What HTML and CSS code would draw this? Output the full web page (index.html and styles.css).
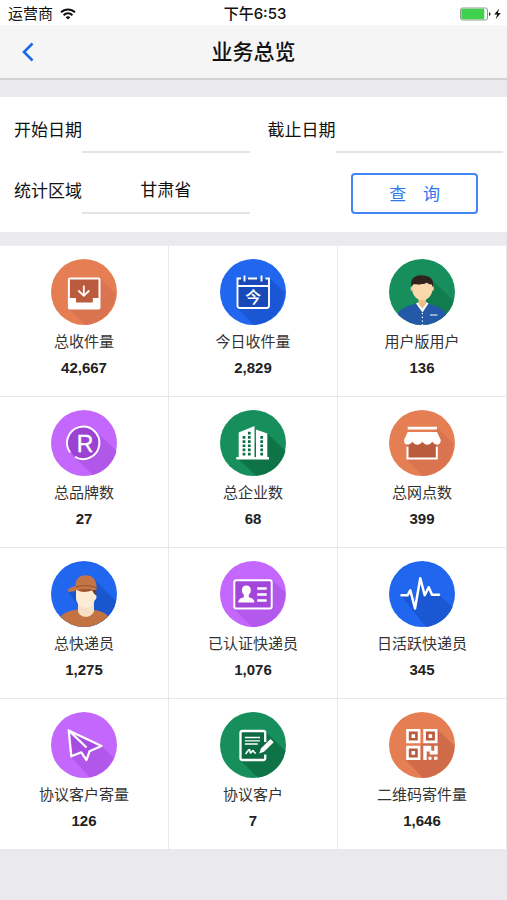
FILE: index.html
```html
<!DOCTYPE html>
<html lang="zh-CN">
<head>
<meta charset="utf-8">
<meta name="viewport" content="width=device-width, initial-scale=1">
<title>业务总览</title>
<link rel="stylesheet" href="styles.css">
</head>
<body>
<div class="status">
  <div class="status-side">
    <span>运营商</span>
    <svg width="16" height="12" viewBox="0 0 16 12" fill="none" stroke="#111" stroke-width="2" aria-hidden="true"><path d="M1 4.4a10 10 0 0 1 14 0M3.6 7.2a6.2 6.2 0 0 1 8.8 0"/><path d="M8 11.6 5.6 9.3a3.5 3.5 0 0 1 4.8 0z" fill="#111" stroke="none"/></svg>
  </div>
  <span class="status-time">下午6:53</span>
  <div class="status-side status-end">
    <svg width="42" height="14" viewBox="0 0 42 14" aria-hidden="true"><rect x=".5" y="1" width="27" height="12" rx="2" fill="#fff" stroke="#8b9a8c"/><rect x="1.3" y="1.8" width="23" height="10.4" rx="1.2" fill="#40d14f"/><path d="M29 5.2c2 .4 2 3.2 0 3.6z" fill="#333"/><path d="M39.2 1.6 34.2 7.6h3l-1.600 4.700 5.200-6.200h-3.100z" fill="#111"/></svg>
  </div>
</div>
<header class="nav">
  <a class="back" href="#" aria-label="返回"><svg width="12" height="20" viewBox="0 0 12 20" fill="none" stroke="#1668f5" stroke-width="2.600"><path d="M10.500 1.500 2 10l8.500 8.500"/></svg></a>
  <h1>业务总览</h1>
</header>
<main>
  <form class="filters">
    <div class="field"><label for="start">开始日期</label><input id="start" type="text"></div>
    <div class="field"><label for="end">截止日期</label><input id="end" type="text"></div>
    <div class="field"><label for="area">统计区域</label><select id="area"><option>甘肃省</option></select></div>
    <button class="query" type="button">查　询</button>
  </form>
  <section class="stats">
    <article class="stat">
      <svg class="icon" viewBox="0 0 66 66" aria-hidden="true"><circle cx="33" cy="33" r="33" fill="#e67e54"/><path d="M49 19 64.500 34.500A33 33 0 0 1 34.500 66L18 50z" fill="#d97350"/><rect x="17.900" y="19.500" width="30.600" height="30" rx="1" fill="#b95b3c" stroke="#fff" stroke-width="2"/><path d="M17 39h8v4.500h16.800V39H49v11H17z" fill="#fff"/><path d="M32.800 26.500v10M27.300 31.500l5.500 5.300 5.500-5.300" fill="none" stroke="#fff" stroke-width="1.800"/></svg>
      <h2>总收件量</h2><p>42,667</p>
    </article>
    <article class="stat">
      <svg class="icon" viewBox="0 0 66 66" aria-hidden="true"><circle cx="33" cy="33" r="33" fill="#2166ef"/><path d="M50 19 64.500 33.500A33 33 0 0 1 34 66L17 49z" fill="#1b57d5"/><path d="M17.500 20h31v29h-31z" fill="#1749b8"/><path d="M21 19.500h-3.500v27a2.500 2.500 0 0 0 2.500 2.500h26.500a2.500 2.500 0 0 0 2.500-2.500v-27h-3.500M28 19.500h9M17.500 27H49M24.500 16.500v6M41.500 16.500v6" fill="none" stroke="#fff" stroke-width="1.900"/><text class="glyph-today" x="33.200" y="43.500">今</text></svg>
      <h2>今日收件量</h2><p>2,829</p>
    </article>
    <article class="stat">
      <svg class="icon" viewBox="0 0 66 66" aria-hidden="true"><clipPath id="c1"><circle cx="33" cy="33" r="33"/></clipPath><g clip-path="url(#c1)"><path d="M0 0h66v66H0z" fill="#168f5d"/><path d="M43 21 66 43v23H48L28 44z" fill="#117d4e"/><path d="M9 66V54c3-5 9-7 18-9.500h12c9 2.500 15 4.500 18 9.500v12z" fill="#2459a8"/><path d="M27 44.500 30 43h7l2.500 1.500-6 9z" fill="#fff"/><path d="M29.500 38h7.500v7l-3.700 4.500-3.800-4.500z" fill="#efbd8c"/><ellipse cx="22.800" cy="29.500" rx="1.200" ry="2.600" fill="#f3c79a"/><ellipse cx="43.700" cy="29.500" rx="1.200" ry="2.600" fill="#f3c79a"/><path d="M23.300 23h20v8c0 5-5 10.500-10 10.500s-10-5.500-10-10.500z" fill="#fbd7ac"/><path d="M22.500 28c-1.700-7 2-11.500 9-11.700 8-.2 14.500 3.500 12.300 11.700l-1-2.500c-2.500.2-4-1-5-2-3 2.500-6 1-8 2.300-2.500-.8-4.500-.5-5.800-.3z" fill="#30231e"/><path d="M33.400 54v12" stroke="#fff" stroke-width="1.200" stroke-dasharray="1.300 2.400"/><path d="M41 56h7.500" stroke="#fff" stroke-width="1.200"/></g></svg>
      <h2>用户版用户</h2><p>136</p>
    </article>
    <article class="stat">
      <svg class="icon" viewBox="0 0 66 66" aria-hidden="true"><circle cx="33" cy="33" r="33" fill="#c467fc"/><path d="M45 21.500 65.500 41A33 33 0 0 1 42 65L21 45z" fill="#b157ea"/><circle cx="33" cy="33" r="16" fill="#9b42d3"/><path d="M19.200 42.500A16.200 16.200 0 1 1 24 46.800" fill="none" stroke="#fff" stroke-width="2"/><text class="glyph-r" x="34" y="42">R</text></svg>
      <h2>总品牌数</h2><p>27</p>
    </article>
    <article class="stat">
      <svg class="icon" viewBox="0 0 66 66" aria-hidden="true"><circle cx="33" cy="33" r="33" fill="#168f5d"/><path d="M47 23 65.500 41A33 33 0 0 1 36 65.800L17 48z" fill="#0e7448"/><path d="M18.700 22.500 34.500 16v31H36V19.500l11.300 4V47H49v2.500H16.300V47h2.400z" fill="#fff"/><g stroke="#0c7044" stroke-width="2.700"><path d="M24 26v20.500" stroke-dasharray="2.700 1.500"/><path d="M29.300 21.800v25" stroke-dasharray="2.700 1.500"/><path d="M41.700 26v20.500" stroke-dasharray="2.700 1.500"/></g></svg>
      <h2>总企业数</h2><p>68</p>
    </article>
    <article class="stat">
      <svg class="icon" viewBox="0 0 66 66" aria-hidden="true"><circle cx="33" cy="33" r="33" fill="#e67e54"/><path d="M48 17 64.500 33.500A33 33 0 0 1 34 66L17.500 49.500z" fill="#d97350"/><path d="M18 33h30v16H18z" fill="#b95b3c"/><path d="M18.500 36.500V48.500h29.300v-12" fill="none" stroke="#fff" stroke-width="2"/><path d="M18.700 16.800H48v2.800H18.700zM18.700 22H48l3.800 8c0 3-1.500 4.500-3.600 4.700-2.200 0-4-1.200-4.900-3.400-1 2.200-2.800 3.400-5 3.400s-4-1.200-5-3.400c-1 2.200-2.800 3.400-5 3.400s-4-1.200-5-3.400c-1 2.200-2.700 3.400-4.700 3.400-2.400-.2-3.700-1.700-3.600-4.700z" fill="#fff"/></svg>
      <h2>总网点数</h2><p>399</p>
    </article>
    <article class="stat">
      <svg class="icon" viewBox="0 0 66 66" aria-hidden="true"><clipPath id="c2"><circle cx="33" cy="33" r="33"/></clipPath><g clip-path="url(#c2)"><path d="M0 0h66v66H0z" fill="#2166ef"/><path d="M44 19 66 41v25H44L17 31z" fill="#1a57cf"/><path d="M9 66V56c4-4.500 9-6.500 18-7.500h13c9 1 14 3 18 7.500v10z" fill="#c37242"/><path d="M27 41h16v9c-1 3.500-4.500 5.800-8.500 5.800S27.500 53 27 50z" fill="#f8e0c6"/><path d="M25 28h19.500v6c1.500-.5 1.500 4.500-.8 5-1 5-4.700 8-8.700 8-6 0-10-5-10-10z" fill="#fdebd5"/><path d="M40.500 28.500h4.700v6l-1.700-1.500c-1.500-1-1-2-3-4.500z" fill="#704126"/><path d="M26 29c4 2.500 10 2.500 16 0l-3-2H28z" fill="#a45330"/><path d="M24.500 25c0-7 4-10.700 10.300-10.700 6.500 0 10.700 4.700 10.700 11.200V29c-6-1.500-16-1.500-21 .5-3 1.300-5.500 1.500-7.700.7-.5-2.200 4.500-4.700 7.700-5.200z" fill="#c47546"/><path d="M24.500 26c7-2 15-2 21 1" fill="none" stroke="#965131"/></g></svg>
      <h2>总快递员</h2><p>1,275</p>
    </article>
    <article class="stat">
      <svg class="icon" viewBox="0 0 66 66" aria-hidden="true"><circle cx="33" cy="33" r="33" fill="#c467fc"/><path d="M52 19 65 31A33 33 0 0 1 32 66L14 48z" fill="#b359eb"/><rect x="14.300" y="19.300" width="37.400" height="28.200" rx="2" fill="#a346da" stroke="#fff" stroke-width="2"/><path d="M26.300 24.500c3 0 4.500 2 4.500 4.800 0 2.200-1 3.500-2 4.500v2.500c2.700.8 5.500 1.700 5.700 5.200H18.200c.2-3.500 3-4.400 5.700-5.200v-2.500c-1-1-2-2.300-2-4.500 0-2.800 1.500-4.800 4.400-4.800z" fill="#fff"/><path d="M37.200 27.500h9.500M37.200 33.500h9.500M37.200 39.500h9.500" stroke="#fff" stroke-width="2.600"/></svg>
      <h2>已认证快递员</h2><p>1,076</p>
    </article>
    <article class="stat">
      <svg class="icon" viewBox="0 0 66 66" aria-hidden="true"><circle cx="33" cy="33" r="33" fill="#2166ef"/><path d="M12.500 35 37 66A33 33 0 0 0 63.500 46L50 34l-7-1-4-7-4 4-4-13-5 29-4.700-16.500z" fill="#1b57d3"/><path d="M12.500 34.300h6l2.800-5L26 47.500l5.300-30.300 4.400 17 4-8 3.300 7.500h7" fill="none" stroke="#fff" stroke-width="2.500" stroke-linejoin="round" stroke-linecap="round"/></svg>
      <h2>日活跃快递员</h2><p>345</p>
    </article>
    <article class="stat">
      <svg class="icon" viewBox="0 0 66 66" aria-hidden="true"><circle cx="33" cy="33" r="33" fill="#c467fc"/><path d="M51 34 62.500 46A33 33 0 0 1 39 65.400L20 45z" fill="#b157ea"/><path d="M17.700 18.500 50.500 34l-12 5.300-3 8.700-5.200-7.700-10 4z" fill="#a84be0" stroke="#fff" stroke-width="2.300" stroke-linejoin="round"/><path d="M18 18.700 35.500 35.500" stroke="#fff" stroke-width="2.300"/></svg>
      <h2>协议客户寄量</h2><p>126</p>
    </article>
    <article class="stat">
      <svg class="icon" viewBox="0 0 66 66" aria-hidden="true"><circle cx="33" cy="33" r="33" fill="#168f5d"/><path d="M45 19 65.500 39A33 33 0 0 1 38 65.600L20 48z" fill="#0e7448"/><path d="M20.500 19h24.700v29H20.500z" fill="#0c6a40"/><path d="M45.200 30v-9a2 2 0 0 0-2-2H22.500a2 2 0 0 0-2 2v25a2 2 0 0 0 2 2h20.700a2 2 0 0 0 2-2v-3.500" fill="none" stroke="#fff" stroke-width="2.300"/><path d="M24.800 25.500H40M24.800 28.800H40M24.800 32h13" stroke="#fff" stroke-width="1.300"/><path d="M25.500 42c2-2 2.500-4.500 4-4.500.8 0 0 3.500 1 3.500s1.500-2.500 2.500-2.500.5 3 3 2.500" fill="none" stroke="#fff" stroke-width="1.600"/><path d="m50.500 27 3.200 3.200-9.700 9.500-4.700 1.800 1.600-5z" fill="#fff"/></svg>
      <h2>协议客户</h2><p>7</p>
    </article>
    <article class="stat">
      <svg class="icon" viewBox="0 0 66 66" aria-hidden="true"><circle cx="33" cy="33" r="33" fill="#e67e54"/><path d="M48.500 17.500 65.500 34A33 33 0 0 1 34 66L17 48z" fill="#cf6b48"/><g fill="#b95b3c" stroke="#fff" stroke-width="2.600"><path d="M18.500 18.300h11.600v11.600H18.500zM35.600 18.300h11.600v11.600H35.600zM18.500 35.100h11.600v11.600H18.500z"/></g><path d="M22.500 22.300h3.600v3.600h-3.600zM39.600 22.300h3.600v3.600h-3.600zM22.500 39.100h3.600v3.600h-3.600zM34.300 33.800h8v5h3v-5h3.400v8.700h-8v-3h-3v8.500h-3.400zM39.500 44.800h3v3h-3zM45 44.800h3.500v3H45z" fill="#fff"/></svg>
      <h2>二维码寄件量</h2><p>1,646</p>
    </article>
  </section>
</main>
</body>
</html>
```
FILE: styles.css
```css
* {
  box-sizing: border-box;
}

body {
  margin: 0;
  min-height: 100vh;
  background: #e9e9ee;
  color: #111;
  font-family: "Liberation Sans", "Noto Sans CJK SC", sans-serif;
}

.status {
  display: flex;
  align-items: center;
  height: 25px;
  padding: 2px 5px 0 8px;
  background: #fff;
  font-size: 15px;
  line-height: 22px;
}

.status-side {
  display: flex;
  flex: 1;
  align-items: center;
  gap: 7px;
}

.status-end {
  justify-content: flex-end;
}

.status-time {
  font-family: Inter, "Noto Sans CJK SC", sans-serif;
  font-weight: 500;
}

.nav {
  display: grid;
  grid-template-columns: 56px 1fr 56px;
  align-items: center;
  height: 55px;
  border-bottom: 2px solid #d2d2d6;
  background: #f5f5f6;
}

.back {
  display: flex;
  justify-content: center;
}

.nav h1 {
  margin: 0;
  font-size: 21px;
  font-weight: 500;
  line-height: 30px;
  text-align: center;
}

.filters {
  display: grid;
  grid-template-columns: repeat(2, minmax(0, 1fr));
  row-gap: 15px;
  margin: 17px 0 13px;
  padding: 10px 0 18px;
  background: #fff;
  font-size: 17px;
}

.field {
  display: flex;
  align-items: center;
  height: 46px;
  padding: 0 4px 0 14px;
}

.field label {
  padding-bottom: 4px;
}

.field input,
.field select {
  flex: 1;
  min-width: 0;
  height: 46px;
  padding: 0;
  border: 0;
  border-bottom: 2px solid #e4e4e6;
  border-radius: 0;
  outline: 0;
  appearance: none;
  background: transparent;
  color: inherit;
  font: inherit;
  text-align: center;
  text-align-last: center;
}

.query {
  align-self: end;
  justify-self: end;
  width: 50%;
  height: 41px;
  margin-right: 29px;
  padding: 0 0 2px;
  border: 2px solid #4285f4;
  border-radius: 4px;
  background: #fff;
  color: #2f78f2;
  font: inherit;
}

.stats {
  display: grid;
  grid-template-columns: repeat(3, minmax(0, 1fr));
  border-top: 1px solid #efeff1;
  background: #fff;
}

.stat {
  display: flex;
  flex-direction: column;
  align-items: center;
  height: 151px;
  padding-top: 13px;
  border-right: 1px solid #e8e8eb;
  border-bottom: 1px solid #e8e8eb;
}

.icon {
  width: 66px;
  height: 66px;
}

.stat h2 {
  margin: 5px 0 0;
  color: #333;
  font-size: 15px;
  font-weight: 400;
  line-height: 24px;
}

.stat p {
  margin: 4px 0 0;
  color: #222;
  font-size: 15px;
  font-weight: 700;
  line-height: 20px;
}

.glyph-today {
  fill: #fff;
  font-size: 16px;
  font-weight: 500;
  text-anchor: middle;
}

.glyph-r {
  fill: #fff;
  stroke: #fff;
  stroke-width: 0.4px;
  font-size: 23px;
  text-anchor: middle;
}
```
